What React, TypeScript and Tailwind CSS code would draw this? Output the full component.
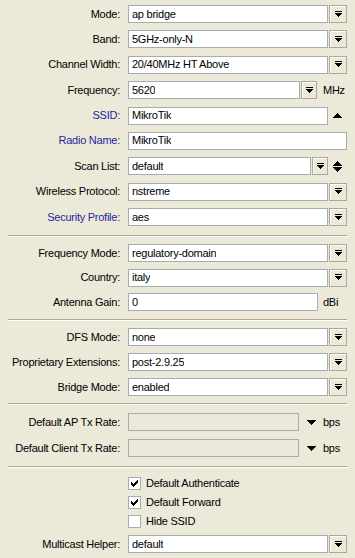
import type { ReactNode } from "react";

const LABEL_W = "w-[112px]";

function DropIcon() {
  return (
    <svg width="7" height="7" viewBox="0 0 7 7" shapeRendering="crispEdges">
      <rect x="0" y="0" width="7" height="1" fill="#000" />
      <polygon points="0,2 7,2 3.5,6" fill="#000" />
    </svg>
  );
}

function DropButton({ narrow = false }: { narrow?: boolean }) {
  return (
    <div
      className={`ml-px flex h-[18px] shrink-0 items-center justify-center border border-[#ACA899] bg-[#ECE9D8] shadow-[inset_1px_1px_0_#fff] ${
        narrow ? "w-[16px]" : "w-[18px]"
      }`}
    >
      <DropIcon />
    </div>
  );
}

function Box({
  value,
  disabled = false,
  className = "",
}: {
  value?: string;
  disabled?: boolean;
  className?: string;
}) {
  return (
    <div
      className={`flex h-[18px] min-w-0 items-center border border-[#A5ACB2] pl-[3px] ${
        disabled ? "bg-[#ECE9D8]" : "bg-white"
      } ${className}`}
    >
      <span className="truncate">{value}</span>
    </div>
  );
}

function Row({
  label,
  blue = false,
  children,
}: {
  label: string;
  blue?: boolean;
  children: ReactNode;
}) {
  return (
    <div className="flex h-[18px] items-center">
      <div
        className={`${LABEL_W} shrink-0 whitespace-nowrap text-right ${
          blue ? "text-[#1F1FA0]" : "text-black"
        }`}
      >
        {label}:
      </div>
      <div className="ml-[8px] flex min-w-0 flex-1 items-center">{children}</div>
    </div>
  );
}

function Select({ value }: { value: string }) {
  return (
    <>
      <Box value={value} className="flex-1" />
      <DropButton />
    </>
  );
}

function Separator({ className = "" }: { className?: string }) {
  return <div className={`h-[2px] border-t border-[#ACA899] border-b border-b-white ${className}`} />;
}

function UpArrow() {
  return (
    <svg width="9" height="5" viewBox="0 0 9 5" shapeRendering="crispEdges">
      <polygon points="4.5,0 9,5 0,5" fill="#000" />
    </svg>
  );
}

function DownArrow() {
  return (
    <svg width="9" height="5" viewBox="0 0 9 5" shapeRendering="crispEdges">
      <polygon points="0,0 9,0 4.5,5" fill="#000" />
    </svg>
  );
}

function Check({ checked, label }: { checked: boolean; label: string }) {
  return (
    <div className="flex h-[19px] items-center">
      <div className={`${LABEL_W} shrink-0`} />
      <div className="ml-[8px] flex items-center">
        <div className="flex h-[13px] w-[13px] items-center justify-center border border-[#A5ACB2] bg-white">
          {checked ? (
            <svg width="7" height="7" viewBox="0 0 7 7" shapeRendering="crispEdges">
              <path d="M0 2h1v1h1v1h1V3h1V2h1V1h1V0h1v3H6v1H5v1H4v1H3v1H2V6H1V5H0z" fill="#000" />
            </svg>
          ) : null}
        </div>
        <span className="ml-[5px]">{label}</span>
      </div>
    </div>
  );
}

export default function App() {
  return (
    <div
      className="h-[558px] w-[355px] overflow-hidden bg-[#ECE9D8] px-[8px] pt-[5px] text-[11px] leading-none tracking-[-0.25px] text-black"
      style={{ fontFamily: '"Liberation Sans", Arial, sans-serif' }}
    >
      <div className="flex flex-col gap-[7.4px]">
        <Row label="Mode">
          <Select value="ap bridge" />
        </Row>
        <Row label="Band">
          <Select value="5GHz-only-N" />
        </Row>
        <Row label="Channel Width">
          <Select value="20/40MHz HT Above" />
        </Row>
        <Row label="Frequency">
          <Box value="5620" className="flex-1" />
          <DropButton narrow />
          <span className="ml-[6px] w-[24px]">MHz</span>
        </Row>
        <Row label="SSID" blue>
          <Box value="MikroTik" className="flex-1" />
          <div className="flex w-[19px] shrink-0 justify-center">
            <UpArrow />
          </div>
        </Row>
        <Row label="Radio Name" blue>
          <Box value="MikroTik" className="flex-1" />
        </Row>
        <Row label="Scan List">
          <Box value="default" className="flex-1" />
          <DropButton narrow />
          <div className="flex w-[19px] shrink-0 flex-col items-center gap-[1px]">
            <UpArrow />
            <DownArrow />
          </div>
        </Row>
        <Row label="Wireless Protocol">
          <Select value="nstreme" />
        </Row>
        <Row label="Security Profile" blue>
          <Select value="aes" />
        </Row>
      </div>

      <Separator className="mb-[7px] mt-[9px]" />

      <div className="flex flex-col gap-[6.5px]">
        <Row label="Frequency Mode">
          <Select value="regulatory-domain" />
        </Row>
        <Row label="Country">
          <Select value="italy" />
        </Row>
        <Row label="Antenna Gain">
          <Box value="0" className="flex-1" />
          <span className="ml-[5px] w-[24px]">dBi</span>
        </Row>
      </div>

      <Separator className="mb-[7px] mt-[8px]" />

      <div className="flex flex-col gap-[7px]">
        <Row label="DFS Mode">
          <Select value="none" />
        </Row>
        <Row label="Proprietary Extensions">
          <Select value="post-2.9.25" />
        </Row>
        <Row label="Bridge Mode">
          <Select value="enabled" />
        </Row>
      </div>

      <Separator className="mb-[8px] mt-[7px]" />

      <div className="flex flex-col gap-[8px]">
        <Row label="Default AP Tx Rate">
          <Box disabled className="flex-1" />
          <div className="flex w-[24px] shrink-0 justify-center">
            <DownArrow />
          </div>
          <span className="w-[24px]">bps</span>
        </Row>
        <Row label="Default Client Tx Rate">
          <Box disabled className="flex-1" />
          <div className="flex w-[24px] shrink-0 justify-center">
            <DownArrow />
          </div>
          <span className="w-[24px]">bps</span>
        </Row>
      </div>

      <Separator className="mb-[6px] mt-[9px]" />

      <Check checked label="Default Authenticate" />
      <Check checked label="Default Forward" />
      <Check checked={false} label="Hide SSID" />

      <div className="mt-[4px]">
        <Row label="Multicast Helper">
          <Select value="default" />
        </Row>
      </div>
    </div>
  );
}
